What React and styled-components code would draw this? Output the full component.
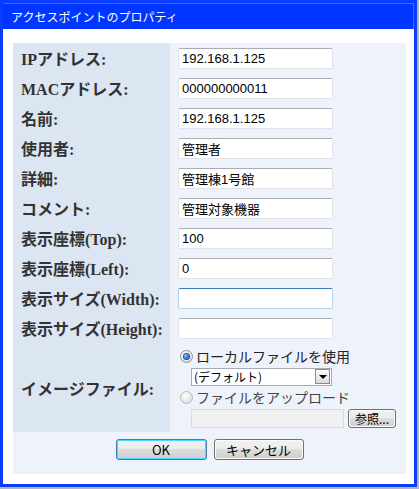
import React from 'react';
import styled, { createGlobalStyle, css } from 'styled-components';

// GLOBAL
const Global = createGlobalStyle`
  html, body { margin: 0; padding: 0; }
  body {
    width: 419px;
    height: 489px;
    background: #b4b4b4;
    font-family: "Liberation Sans", "Noto Sans CJK JP", sans-serif;
    overflow: hidden;
  }
`;

const jp = `"Liberation Sans", "Noto Sans CJK JP", sans-serif`;

// STYLES
const Window = styled.div`
  box-sizing: border-box;
  width: 417px;
  height: 487px;
  background-color: #ffffff;
  border: 3px solid #0a3cff;
  display: flex;
  flex-direction: column;
`;

const TitleBar = styled.div`
  box-sizing: border-box;
  flex: 0 0 26px;
  height: 26px;
  background-color: #0036ff;
  border-top: 1px solid #3b68ff;
  border-right: 1px solid #3b68ff;
  display: flex;
  align-items: center;
  padding-left: 8px;
  color: #ffffff;
  font-family: "Noto Sans CJK JP", sans-serif;
  font-size: 12px;
`;

const Body = styled.div`
  flex: 1;
  padding: 14px 8px 11px 10px;
  display: flex;
`;

const Panel = styled.div`
  flex: 1;
  background: #eef3fb;
  display: flex;
  flex-direction: column;
`;

const Grid = styled.div`
  display: grid;
  grid-template-columns: 157px 1fr;
  grid-auto-rows: 30px;
`;

const Label = styled.div`
  background: #dce6f2;
  display: flex;
  align-items: center;
  padding-left: 8px;
  font-family: "Liberation Serif", "Noto Sans CJK JP", serif;
  font-weight: bold;
  font-size: 16px;
  color: #333;
  white-space: nowrap;
  ${p => p.$tall && css`grid-row: span 3; height: 89px;`}
`;

const Field = styled.div`
  display: flex;
  align-items: center;
  padding-left: 8px;
  ${p => p.$tall && css`
    grid-row: span 3;
    height: 89px;
    flex-direction: column;
    align-items: flex-start;
    justify-content: center;
    padding-left: 10px;
    gap: 3px;
  `}
`;

const TextBox = styled.input`
  box-sizing: border-box;
  width: 155px;
  height: 21px;
  margin: 0;
  padding: 0 3px;
  background: #fff;
  border: 1px solid ${p => (p.$active ? '#b5d3ec' : '#e2e3ea')};
  border-top-color: ${p => (p.$active ? '#3d7bad' : '#abadb3')};
  border-radius: 2px;
  font-family: ${jp};
  font-size: 13px;
  color: #000;
  outline: none;
`;

const RadioRow = styled.label`
  display: flex;
  align-items: center;
  gap: 3px;
  height: 17px;
  font-family: "Noto Sans CJK JP", sans-serif;
  font-size: 14px;
  white-space: nowrap;
  color: ${p => (p.$dim ? '#444' : '#222')};
`;

const Radio = styled.span`
  box-sizing: border-box;
  flex: 0 0 13px;
  width: 13px;
  height: 13px;
  border-radius: 50%;
  border: 1px solid ${p => (p.$dim ? '#b8b8b8' : '#8e8f8f')};
  background: radial-gradient(circle at 40% 35%, #fff 0%, #e6e6e6 60%, #d0d0d0 100%);
  display: flex;
  align-items: center;
  justify-content: center;
  &::after {
    content: '';
    display: ${p => (p.$checked ? 'block' : 'none')};
    width: 5px;
    height: 5px;
    border-radius: 50%;
    background: radial-gradient(circle at 35% 35%, #8cc4ff 0%, #2168d8 60%, #0a3e8f 100%);
    box-shadow: 0 0 0 1px #1b4c99;
  }
`;

const Indent = styled.div`
  display: flex;
  align-items: center;
  gap: 4px;
  padding-left: 11px;
`;

const Select = styled.div`
  box-sizing: border-box;
  width: 141px;
  height: 18px;
  background: #fff;
  border: 1px solid #a5acb5;
  display: flex;
  align-items: center;
  justify-content: space-between;
  padding-left: 2px;
  font-family: "Noto Sans CJK JP", sans-serif;
  font-size: 12px;
  color: #000;
`;

const DropButton = styled.span`
  box-sizing: border-box;
  width: 15px;
  height: 15px;
  margin-right: 1px;
  border: 1px solid #8a8a8a;
  background: linear-gradient(#fdfdfd, #dcdcdc);
  display: flex;
  align-items: center;
  justify-content: center;
  &::after {
    content: '';
    border-left: 4px solid transparent;
    border-right: 4px solid transparent;
    border-top: 4px solid #000;
  }
`;

const FileBox = styled.div`
  box-sizing: border-box;
  width: 153px;
  height: 19px;
  background: #f0f0f0;
  border: 1px solid #dadada;
`;

const Button = styled.button`
  box-sizing: border-box;
  width: ${p => p.$w}px;
  height: ${p => p.$h}px;
  margin: 0;
  padding: 0;
  border: 1px solid ${p => (p.$primary ? '#3c7fb1' : '#707070')};
  border-radius: 3px;
  background: linear-gradient(#f2f2f2 0%, #ebebeb 49%, #dddddd 50%, #cfcfcf 100%);
  box-shadow: inset 0 0 0 1px ${p => (p.$primary ? '#48d9ff' : '#fcfcfc')};
  font-family: "Noto Sans CJK JP", "Liberation Sans", sans-serif;
  font-size: ${p => p.$fs || 13}px;
  color: #000;
  display: flex;
  align-items: center;
  justify-content: center;
`;

const Footer = styled.div`
  height: 41px;
  display: flex;
  justify-content: center;
  align-items: flex-start;
  padding-top: 6px;
  box-sizing: border-box;
  gap: 7px;
`;

// DATA
const rows = [
  ['IPアドレス:', '192.168.1.125'],
  ['MACアドレス:', '000000000011'],
  ['名前:', '192.168.1.125'],
  ['使用者:', '管理者'],
  ['詳細:', '管理棟1号館'],
  ['コメント:', '管理対象機器'],
  ['表示座標(Top):', '100'],
  ['表示座標(Left):', '0'],
  ['表示サイズ(Width):', '', true],
  ['表示サイズ(Height):', ''],
];

// COMPONENT
const App = () => (
  <>
    <Global />
    <Window>
      <TitleBar>アクセスポイントのプロパティ</TitleBar>
      <Body>
        <Panel>
          <Grid>
            {rows.map(([label, value, active]) => (
              <React.Fragment key={label}>
                <Label>{label}</Label>
                <Field>
                  <TextBox defaultValue={value} $active={active} />
                </Field>
              </React.Fragment>
            ))}
            <Label $tall>イメージファイル:</Label>
            <Field $tall>
              <RadioRow>
                <Radio $checked />
                ローカルファイルを使用
              </RadioRow>
              <Indent>
                <Select>
                  (デフォルト)
                  <DropButton />
                </Select>
              </Indent>
              <RadioRow $dim>
                <Radio $dim />
                ファイルをアップロード
              </RadioRow>
              <Indent>
                <FileBox />
                <Button $w={48} $h={19} $fs={12}>参照...</Button>
              </Indent>
            </Field>
          </Grid>
          <Footer>
            <Button $primary $w={91} $h={21}>OK</Button>
            <Button $w={90} $h={21}>キャンセル</Button>
          </Footer>
        </Panel>
      </Body>
    </Window>
  </>
);

export default App;
